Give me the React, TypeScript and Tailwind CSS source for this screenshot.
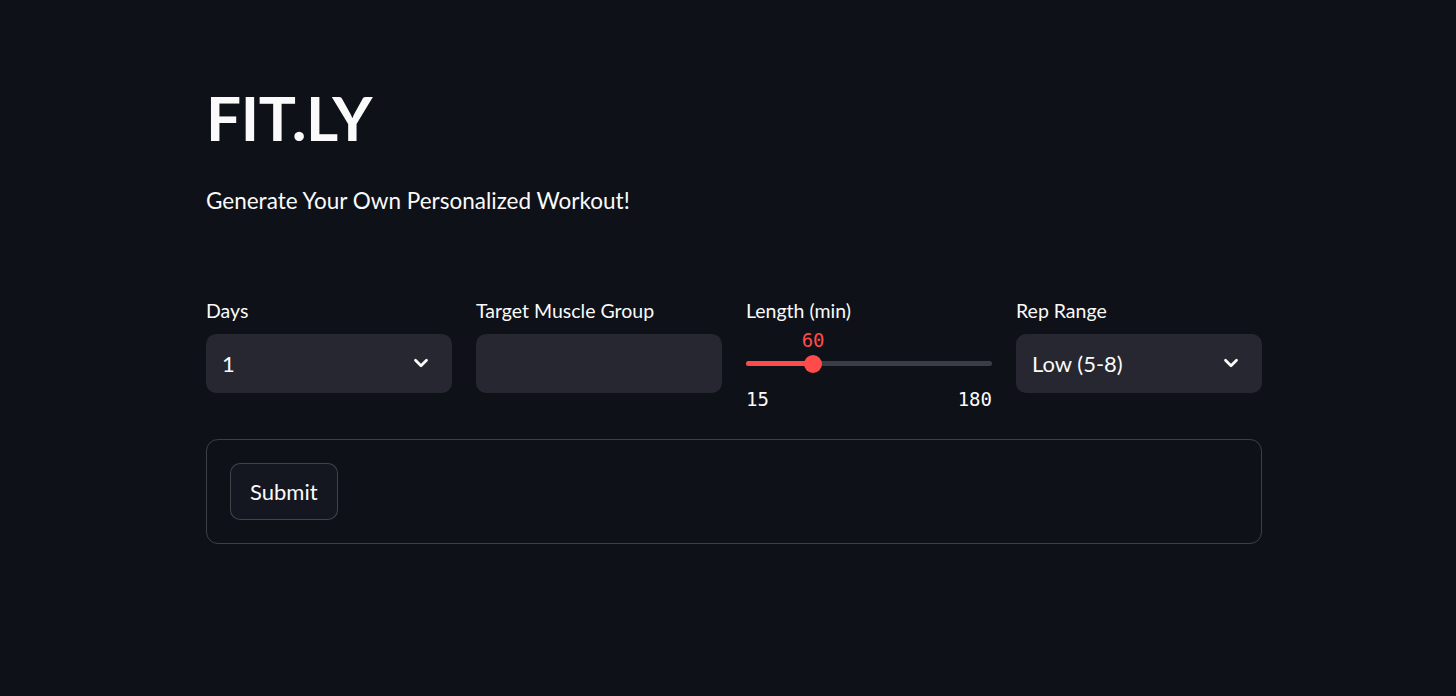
import { ChevronDown } from "lucide-react"

function SelectBox({ value }: { value: string }) {
    return (
        <div className="h-[59px] rounded-[10px] bg-[#262730] flex items-center justify-between pl-[16px] pr-[20px] text-[22px] text-[#fafafa]">
            <span>{value}</span>
            <ChevronDown size={22} strokeWidth={3} className="text-[#fafafa]" />
        </div>
    )
}

export default function App() {
    const min = 15
    const max = 180
    const val = 60
    const pct = ((val - min) / (max - min)) * 100

    return (
        <div className="min-h-[696px] w-full bg-[#0e1117] text-[#fafafa]" style={{ fontFamily: '"Lato", "Noto Sans", sans-serif' }}>
            <div className="w-[1056px] ml-[206px] pt-[80px]">
                <h1 className="text-[62px] font-bold leading-[1.2] tracking-[-0.3px]">FIT.LY</h1>
                <p className="mt-[31px] text-[22.5px] leading-[1.4]">Generate Your Own Personalized Workout!</p>

                <div className="mt-[81px] grid grid-cols-4 gap-[24px] items-start">
                    <div>
                        <div className="text-[19.5px] leading-[26px] mb-[10px]">Days</div>
                        <SelectBox value="1" />
                    </div>
                    <div>
                        <div className="text-[19.5px] leading-[26px] mb-[10px]">Target Muscle Group</div>
                        <div className="h-[59px] rounded-[10px] bg-[#262730]" />
                    </div>
                    <div>
                        <div className="text-[19.5px] leading-[26px]">Length (min)</div>
                        <div className="flex flex-col" style={{ fontFamily: '"DejaVu Sans Mono", monospace' }}>
                            <div className="h-[30px] pt-[4px] text-[19px] leading-[24px] text-[#ff4b4b]">
                                <span className="inline-block -translate-x-1/2" style={{ marginLeft: `${pct}%` }}>{val}</span>
                            </div>
                            <div className="h-[20px] flex items-center">
                                <div className="relative w-full h-[5px] rounded-full bg-[#3b3d46]">
                                    <div className="h-full rounded-full bg-[#ff4b4b]" style={{ width: `${pct}%` }} />
                                    <div className="absolute top-1/2 w-[18px] h-[18px] rounded-full bg-[#ff4b4b] -translate-x-1/2 -translate-y-1/2" style={{ left: `${pct}%` }} />
                                </div>
                            </div>
                            <div className="mt-[13px] flex justify-between text-[19px] leading-[24px]">
                                <span>{min}</span>
                                <span>{max}</span>
                            </div>
                        </div>
                    </div>
                    <div>
                        <div className="text-[19.5px] leading-[26px] mb-[10px]">Rep Range</div>
                        <SelectBox value="Low (5-8)" />
                    </div>
                </div>

                <div className="mt-[28px] border border-[#fafafa]/20 rounded-[12px] p-[23px]">
                    <button className="h-[57px] px-[19px] rounded-[10px] border border-[#fafafa]/20 bg-[#14171f] text-[22px] text-[#fafafa]">Submit</button>
                </div>
            </div>
        </div>
    )
}
